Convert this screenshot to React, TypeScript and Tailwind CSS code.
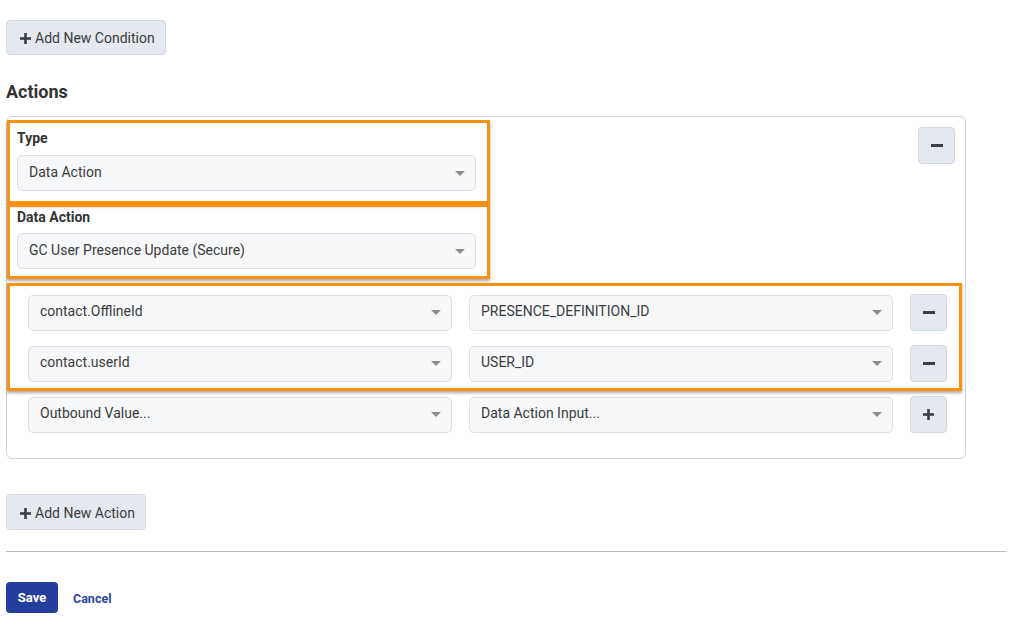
import React from "react";

const Caret = () => (
  <svg width="10" height="5" viewBox="0 0 10 5" className="shrink-0">
    <path d="M0 0 L10 0 L5 5 Z" fill="#8c8c8c" />
  </svg>
);

const Select = ({ value, className = "" }: { value: string; className?: string }) => (
  <div
    className={
      "h-[36px] flex items-center justify-between rounded-[5px] border border-[#dde1e7] bg-[#f7f8fa] pl-[11px] pr-[10px] text-[14px] text-[#3b3b3b] " +
      className
    }
  >
    <span className="-mt-[2px]">{value}</span>
    <Caret />
  </div>
);

const Minus = () => (
  <svg width="12" height="3" viewBox="0 0 12 3">
    <rect x="0" y="0" width="12" height="3" fill="#3d3f44" />
  </svg>
);

const Plus = ({ size = 11 }: { size?: number }) => (
  <svg width={size} height={size} viewBox="0 0 11 11">
    <rect x="0" y="4.2" width="11" height="2.6" fill="#3d3f44" />
    <rect x="4.2" y="0" width="2.6" height="11" fill="#3d3f44" />
  </svg>
);

const IconButton = ({ children }: { children: React.ReactNode }) => (
  <div className="w-[37px] h-[37px] flex items-center justify-center rounded-[4px] border border-[#d3d8df] bg-[#e4e8ef]">
    {children}
  </div>
);

const Orange = ({ className }: { className: string }) => (
  <div
    className={
      "absolute border-[3px] border-[#f8920f] shadow-[0_2px_3px_rgba(0,0,0,0.35)] pointer-events-none " + className
    }
  />
);

export default function App() {
  return (
    <div
      className="relative w-[1020px] h-[630px] bg-white px-[6px] pt-[20px]"
      style={{ fontFamily: "Roboto, 'Liberation Sans', sans-serif" }}
    >
      <div className="w-[160px] h-[35px] flex items-center gap-[4px] pl-[13px] pt-[2px] rounded-[4px] border border-[#d3d8df] bg-[#e4e8ef] text-[14px] text-[#3d3d3d]">
        <Plus />
        <span>Add New Condition</span>
      </div>

      <h2 className="mt-[26px] text-[18px] leading-[22px] font-bold text-[#333]">Actions</h2>

      <div className="mt-[13px] w-[960px] rounded-[6px] border border-[#ced2d8] pt-[10px] pb-[25px] pr-[10px] pl-[10px]">
        <div className="flex justify-between">
          <div className="w-[459px] pt-[1px]">
            <div className="text-[14px] leading-[20px] font-bold text-[#333]">Type</div>
            <Select value="Data Action" className="mt-[7px]" />
            <div className="mt-[16px] text-[14px] leading-[20px] font-bold text-[#333]">Data Action</div>
            <Select value="GC User Presence Update (Secure)" className="mt-[6px]" />
          </div>
          <IconButton>
            <Minus />
          </IconButton>
        </div>

        <div className="mt-[25px] pl-[11px] grid grid-cols-[424px_424px_37px] gap-x-[17px] gap-y-[14px] items-center">
          <Select value="contact.OfflineId" />
          <Select value="PRESENCE_DEFINITION_ID" />
          <IconButton>
            <Minus />
          </IconButton>
          <Select value="contact.userId" />
          <Select value="USER_ID" />
          <IconButton>
            <Minus />
          </IconButton>
          <Select value="Outbound Value..." />
          <Select value="Data Action Input..." />
          <IconButton>
            <Plus size={11} />
          </IconButton>
        </div>
      </div>

      <div className="mt-[35px] w-[140px] h-[36px] flex items-center gap-[4px] pl-[13px] pt-[2px] rounded-[4px] border border-[#d3d8df] bg-[#e4e8ef] text-[14px] text-[#3d3d3d]">
        <Plus />
        <span>Add New Action</span>
      </div>

      <div className="mt-[21px] w-[1000px] h-[1px] bg-[#bdbdbd]" />

      <div className="mt-[30px] flex items-center gap-[15px]">
        <div className="w-[52px] h-[31px] flex items-center justify-center rounded-[4px] bg-[#233f9e] text-white text-[13px] font-bold">
          Save
        </div>
        <span className="mt-[3px] text-[12.5px] font-bold text-[#2a45a3]">Cancel</span>
      </div>

      <Orange className="left-[7px] top-[120px] w-[483px] h-[84px]" />
      <Orange className="left-[7px] top-[204px] w-[483px] h-[75px]" />
      <Orange className="left-[7px] top-[283px] w-[955px] h-[108px]" />
    </div>
  );
}
